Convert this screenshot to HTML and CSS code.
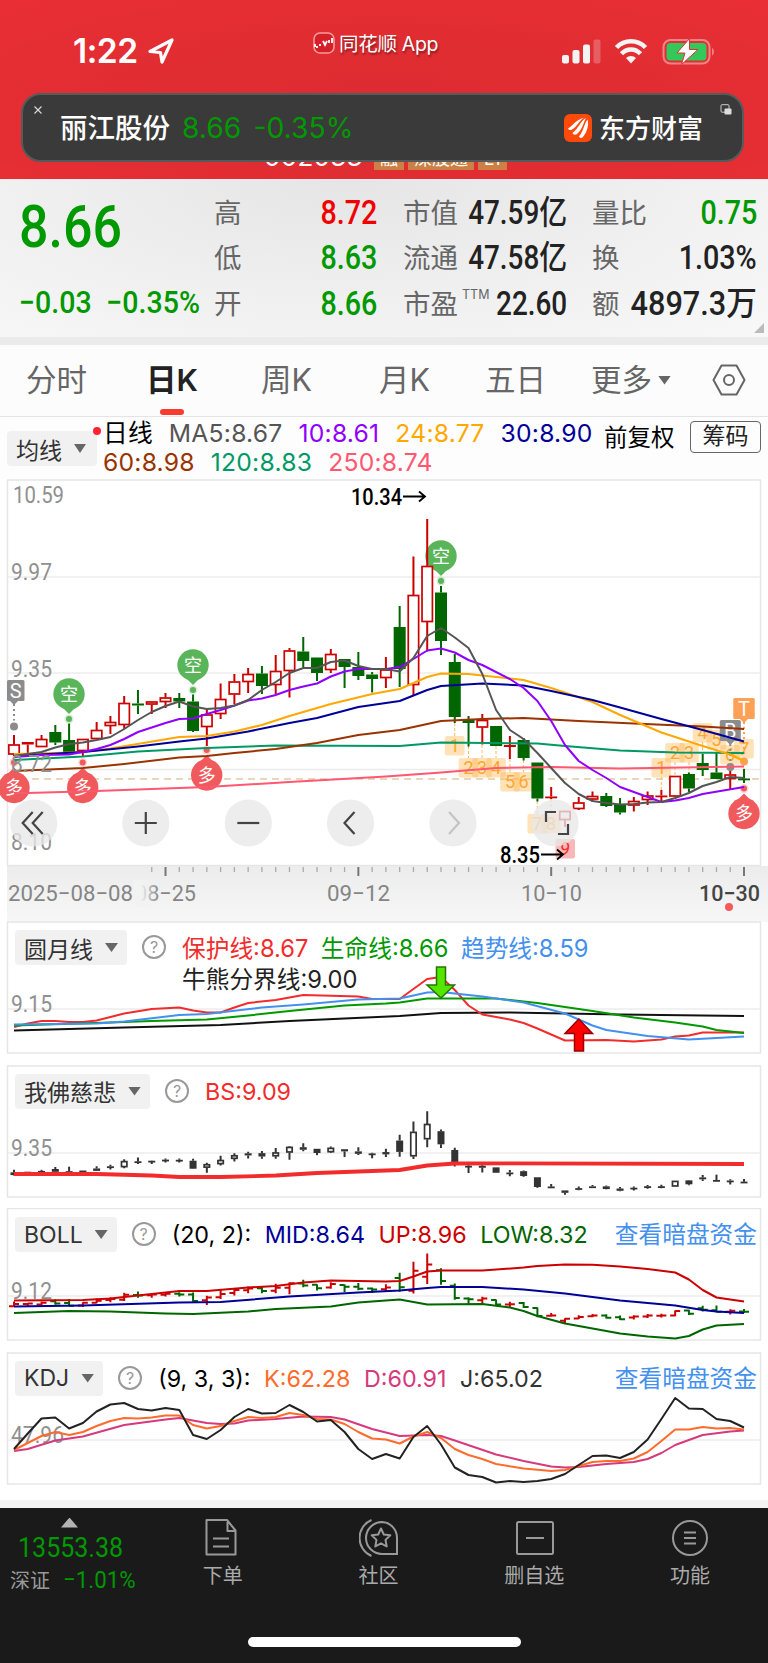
FILE: index.html
```
<!DOCTYPE html>
<html lang="zh-CN">
<head>
    <meta charset="UTF-8">
    <meta name="viewport" content="width=device-width, initial-scale=1.0">
    <title>丽江股份</title>
    <link rel="stylesheet" href="styles.css">
</head>
<body>
    <header class="top">
        <div class="status">
            <div class="clock">
                <span>1:22</span>
                <svg width="28" height="28" viewBox="0 0 28 28"><path d="M3 14.5 L25 3 L15 25 L13.5 15.5 Z" fill="none" stroke="#fff" stroke-width="3.2" stroke-linejoin="round"/></svg>
            </div>
            <div class="source">
                <svg width="22" height="22" viewBox="0 0 22 22"><rect x="1" y="1" width="20" height="20" rx="6" fill="#d5202a" stroke="#f49a9c" stroke-width="1.6"/><path d="M2 12v3M4 14v2M7 12v2M10 9l2 4 2-4M16 8v3M19 6v5" stroke="#fff" stroke-width="1.8" fill="none"/></svg>
                <span>同花顺 App</span>
            </div>
            <svg class="signals" width="154" height="28" viewBox="0 0 154 28">
                <g fill="#f3f3f3">
                    <rect x="1" y="17" width="7" height="8.500" rx="2"/>
                    <rect x="11.500" y="12" width="7" height="13.500" rx="2"/>
                    <rect x="22" y="6.500" width="7" height="19" rx="2"/>
                    <rect x="32.500" y="1.500" width="7" height="24" rx="2" opacity=".25"/>
                    <path d="M70 25.500l-5-5.500a7 7 0 0 1 10 0z"/>
                </g>
                <g fill="none" stroke="#f3f3f3" stroke-width="4.500">
                    <path d="M55.500 9.500a20 20 0 0 1 29 0"/>
                    <path d="M60.500 15.800a12.500 12.500 0 0 1 19 0"/>
                </g>
                <rect x="102.500" y="2" width="46" height="23.500" rx="7" fill="none" stroke="#ee8488" stroke-width="2"/>
                <rect x="105.500" y="5" width="40" height="17.500" rx="4" fill="#34c759"/>
                <path d="M151 10c2.500 1 2.500 6.500 0 7.500z" fill="#ee8488"/>
                <path d="M128.500 .500 L116 15h8l-3.500 11.500L137 11.500h-8.500z" fill="#fff" stroke="#e03036" stroke-width="1"/>
            </svg>
        </div>
        <div class="code-row">
            <span class="code">002033</span><i>融</i><i>深股通</i><i>L1</i>
        </div>
        <div class="floating">
            <svg class="close" width="8" height="8" viewBox="0 0 8 8"><path d="M.5.5l7 7M7.500.5l-7 7" stroke="#ddd" stroke-width="1.100"/></svg>
            <svg class="pip" width="12" height="11" viewBox="0 0 12 11"><rect x="1" y=".700" width="8" height="7.500" rx="1" fill="none" stroke="#ccc"/><rect x="4.500" y="4.500" width="7" height="6" rx="1" fill="#ddd"/></svg>
            <b>丽江股份</b>
            <span class="price">8.66</span>
            <span class="price rate">-0.35%</span>
            <svg class="brand-icon" width="28" height="28" viewBox="0 0 28 28"><rect width="28" height="28" rx="6" fill="#ff4a0c"/><path d="M4 14.500C8 12.500 12 5.500 20.500 3.500c-5 2.500-7 9-12.500 12-2 1-3.500.5-4-1zM8.500 19C14 15 16.500 7 22 4c-3 5-3 11-9 16-2 1.500-4 .5-4.500-1zM15 22.500c4.500-5 5-12.500 8.500-17 1.500 5 0 12-4.500 17.500-1.500 1.500-3.500 1-4-.5z" fill="#fff"/></svg>
            <b class="brand">东方财富</b>
        </div>
    </header>

    <section class="quote">
        <div class="last">
            <span class="num big">8.66</span>
            <div class="change"><span class="num">−0.03</span><span class="num">−0.35%</span></div>
        </div>
        <dl class="stats c1">
            <dt>高</dt><dd class="num up">8.72</dd>
            <dt>低</dt><dd class="num down">8.63</dd>
            <dt>开</dt><dd class="num down">8.66</dd>
        </dl>
        <dl class="stats c2">
            <dt>市值</dt><dd class="num">47.59亿</dd>
            <dt>流通</dt><dd class="num">47.58亿</dd>
            <dt>市盈<sup>TTM</sup></dt><dd class="num">22.60</dd>
        </dl>
        <dl class="stats c3">
            <dt>量比</dt><dd class="num down">0.75</dd>
            <dt>换</dt><dd class="num">1.03%</dd>
            <dt>额</dt><dd class="num">4897.3万</dd>
        </dl>
        <span class="corner"></span>
    </section>

    <nav class="tabs">
        <span>分时</span>
        <span class="active">日K</span>
        <span>周K</span>
        <span>月K</span>
        <span>五日</span>
        <span class="more">更多<i class="caret"></i></span>
        <svg width="34" height="32" viewBox="0 0 34 32"><path d="M9.500 1.500h15L32.500 16l-8 14.500h-15L1.500 16z" fill="none" stroke="#666" stroke-width="2" stroke-linejoin="round"/><circle cx="17" cy="16" r="5" fill="none" stroke="#666" stroke-width="2"/></svg>
    </nav>

    <section class="legend">
        <span class="chip">均线<i class="caret"></i></span>
        <div class="ma">
            <p><em>日线</em><span style="color:#555">MA5:8.67</span><span style="color:#9000ff">10:8.61</span><span style="color:#ffa800">24:8.77</span><span style="color:#000099">30:8.90</span></p>
            <p><span style="color:#993300">60:8.98</span><span style="color:#009966">120:8.83</span><span style="color:#ff5870">250:8.74</span></p>
        </div>
        <span class="adjust">前复权</span>
        <span class="chips-btn">筹码</span>
    </section>

    <svg class="kline" id="kline" viewBox="0 479 768 443" width="768" height="443">
        <defs>
            <linearGradient id="axis" x1="0" y1="0" x2="0" y2="1"><stop offset="0" stop-color="#ececec"/><stop offset="1" stop-color="#f7f7f7"/></linearGradient>
            <linearGradient id="fade"><stop offset="0" stop-color="#f2f2f2"/><stop offset=".3" stop-color="#f2f2f2"/><stop offset="1" stop-color="#f2f2f2" stop-opacity="0"/></linearGradient>
        </defs>
    </svg>

    <section class="panel">
        <svg id="moon" viewBox="0 921 768 133" width="768" height="133"></svg>
        <div class="bar">
            <span class="chip">圆月线<i class="caret"></i></span><span class="help">?</span>
            <p class="vals wrap"><span style="color:#f22c2c">保护线:8.67</span><span style="color:#009900">生命线:8.66</span><span style="color:#4490ee">趋势线:8.59</span><span style="color:#222">牛熊分界线:9.00</span></p>
        </div>
    </section>

    <section class="panel">
        <svg id="buddha" viewBox="0 1064.500 768 133" width="768" height="133"></svg>
        <div class="bar">
            <span class="chip">我佛慈悲<i class="caret"></i></span><span class="help">?</span>
            <p class="vals"><span style="color:#f22c2c">BS:9.09</span></p>
        </div>
    </section>

    <section class="panel">
        <svg id="boll" viewBox="0 1208 768 133" width="768" height="133"></svg>
        <div class="bar">
            <span class="chip">BOLL<i class="caret"></i></span><span class="help">?</span>
            <p class="vals"><span>(20, 2):</span><span style="color:#000099">MID:8.64</span><span style="color:#cc0000">UP:8.96</span><span style="color:#006600">LOW:8.32</span></p>
            <a class="link">查看暗盘资金</a>
        </div>
    </section>

    <section class="panel">
        <svg id="kdj" viewBox="0 1351.500 768 133" width="768" height="133"></svg>
        <div class="bar">
            <span class="chip">KDJ<i class="caret"></i></span><span class="help">?</span>
            <p class="vals"><span>(9, 3, 3):</span><span style="color:#ff6b2c">K:62.28</span><span style="color:#d63a7c">D:60.91</span><span style="color:#333">J:65.02</span></p>
            <a class="link">查看暗盘资金</a>
        </div>
    </section>

    <footer class="bottom">
        <div class="index">
            <i class="tri"></i>
            <span class="num">13553.38</span>
            <div><small>深证</small><span class="num pct">−1.01%</span></div>
        </div>
        <div class="item">
            <svg width="40" height="40" viewBox="0 0 40 40"><path d="M3.500 2h20.500l8.500 10.500v24h-29z M24.500 2v11H32M10 20.500h16M10 28.500h16" fill="none" stroke="#999" stroke-width="2" stroke-linejoin="round"/></svg>
            <span>下单</span>
        </div>
        <div class="item">
            <svg width="40" height="40" viewBox="0 0 40 40"><path d="M23 4a16 16 0 1 0 0 32h15V20A15.500 16 0 0 0 23 4zM12.500 2a19.500 19.500 0 0 0 0 36" fill="none" stroke="#999" stroke-width="2"/><path d="M22 10.500l2.800 6 6.500.8-4.800 4.600 1.200 6.600-5.700-3.200-5.700 3.200 1.200-6.600-4.800-4.600 6.500-.8z" fill="none" stroke="#999" stroke-width="2" stroke-linejoin="round"/></svg>
            <span>社区</span>
        </div>
        <div class="item">
            <svg width="40" height="40" viewBox="0 0 40 40"><rect x="3" y="4" width="36" height="32" rx="1.500" fill="none" stroke="#999" stroke-width="2"/><path d="M12 20h18" stroke="#999" stroke-width="2"/></svg>
            <span>删自选</span>
        </div>
        <div class="item">
            <svg width="40" height="40" viewBox="0 0 40 40"><circle cx="20" cy="20" r="17" fill="none" stroke="#999" stroke-width="2"/><path d="M14 14.500h12M14 20h12M14 25.500h12" stroke="#999" stroke-width="2"/></svg>
            <span>功能</span>
        </div>
        <span class="home"></span>
    </footer>

    <script src="chart.js"></script>
</body>
</html>
```

FILE: styles.css
```
* {
    box-sizing: border-box;
}

body {
    margin: 0;
    width: 768px;
    height: 1663px;
    overflow: hidden;
    background-color: #fff;
    font-family: Inter, "Noto Sans CJK SC", sans-serif;
    color: #222;
}

p, dl, dd {
    margin: 0;
}

i, em {
    font-style: normal;
}

.num {
    font-family: Roboto, "Noto Sans CJK SC", sans-serif;
}

/* red header */
.top {
    position: relative;
    height: 179px;
    overflow: hidden;
    background: radial-gradient(ellipse at 50% 60%, #dc2c31 0%, #e12d32 50%, #e92f35 100%);
}

.status {
    display: flex;
    justify-content: space-between;
    padding: 30px 53px 0 73px;
    height: 80px;
    color: #fff;
}

.clock {
    display: flex;
    gap: 9px;
    width: 240px;
    font-size: 33.500px;
    line-height: 43px;
    font-weight: 600;
    letter-spacing: -0.5px;
}

.clock svg {
    margin-top: 7px;
}

.source {
    display: flex;
    gap: 4px;
    width: 248px;
    font-size: 19.500px;
    line-height: 29px;
    letter-spacing: -0.3px;
    text-shadow: 1px 2px 2px rgba(0, 0, 0, 0.4);
}

.source svg {
    margin-top: 2px;
}

.signals {
    margin-top: 8px;
}

.code-row {
    display: flex;
    align-items: flex-end;
    gap: 4px;
    height: 90px;
    padding-left: 264px;
    color: #fff;
}

.code {
    width: 106px;
    font-size: 26px;
    line-height: 27px;
    letter-spacing: 0.3px;
}

.code-row i {
    padding: 0 6px;
    background-color: #cc8044;
    font-size: 18px;
    line-height: 25px;
    height: 24px;
}

.floating {
    position: absolute;
    left: 21px;
    top: 93px;
    width: 723px;
    height: 69px;
    display: flex;
    align-items: center;
    padding: 0 39px 3px 37px;
    border: 2px solid #555a5a;
    border-radius: 20px;
    background-color: #3a3a3a;
    color: #fff;
}

.floating b {
    font-size: 27.500px;
    font-weight: 500;
}

.floating .price {
    margin: 3px 0 0 12px;
    font-size: 28.300px;
    color: #009900;
}

.brand-icon {
    margin: 3px 0 0 auto;
}

.floating .brand {
    margin-left: 7px;
    font-size: 26px;
}

.close, .pip {
    position: absolute;
    top: 11px;
    left: 11px;
}

.pip {
    top: 9px;
    left: 697px;
}

/* quote */
.quote {
    position: relative;
    display: flex;
    height: 166px;
    padding: 10px 11px 0 19px;
    border-top: 1px solid #f8e8e8;
    border-bottom: 8px solid #ebebeb;
    background: radial-gradient(ellipse at 45% 0, #e5e5e5, #f0f0f0 55%, #f8f8f8);
}

.last {
    width: 195px;
    color: #009900;
}

.big {
    display: block;
    height: 90px;
    font-size: 60px;
    line-height: 74px;
    font-weight: 500;
    transform: scaleX(.865);
    transform-origin: left;
}

.change {
    display: flex;
    gap: 16px;
    font-size: 31px;
    font-weight: 500;
    line-height: 46px;
    transform: scaleX(.92);
    transform-origin: left;
}

.stats {
    display: grid;
    grid-template-columns: 54px 1fr;
    grid-template-rows: 45px 46px 45px;
    align-items: center;
}

.c1 {
    width: 163px;
}

.c2 {
    width: 164px;
    margin-left: 26px;
}

.c3 {
    width: 165px;
    margin-left: 25px;
}

.stats dt {
    font-size: 27.500px;
    line-height: 30px;
    color: #666;
    white-space: nowrap;
}

.stats sup {
    position: relative;
    top: -4px;
    margin-left: 4px;
    font-size: 12.500px;
    line-height: 0;
}

.stats dd {
    justify-self: end;
    margin-left: -50px;
    font-size: 33px;
    font-weight: 500;
    line-height: 40px;
    white-space: nowrap;
    transform: scaleX(.87);
    transform-origin: right;
}

.c2 dd {
    transform: scaleX(.845);
}

.c3 dd:last-child {
    transform: scaleX(.93);
}

.stats .up {
    color: #f00000;
}

.stats .down {
    color: #009900;
}

.corner {
    position: absolute;
    right: 4px;
    bottom: 4px;
    border-left: 10px solid transparent;
    border-bottom: 10px solid #bbb;
}

/* period tabs */
.tabs {
    display: grid;
    grid-template-columns: 122px 113px 118px 106px 106px 120px 34px;
    align-items: center;
    height: 72px;
    padding: 0 0 2px 27px;
    border-bottom: 1px solid #e4e4e4;
    background-color: #fcfcfc;
    font-size: 30.500px;
    color: #666;
}

.tabs span {
    line-height: 40px;
    margin-left: -1px;
}

.tabs .active {
    position: relative;
    margin-left: -3px;
    font-weight: 600;
    color: #222;
}

.active::after {
    content: "";
    position: absolute;
    left: 14px;
    bottom: -15px;
    width: 24px;
    height: 6px;
    border-radius: 3px;
    background-color: #f73c2f;
}

.caret {
    display: inline-block;
    width: 13px;
    height: 9px;
    background-color: #666;
    clip-path: polygon(0 0, 100% 0, 50% 100%);
}

.more .caret {
    margin: 0 0 6px 6px;
}

/* average lines */
.legend {
    display: flex;
    height: 62px;
    padding-left: 7px;
    background-color: #fdfdfd;
}

.chip {
    display: flex;
    align-items: center;
    justify-content: space-between;
    height: 35px;
    padding: 0 9px 0 9px;
    border-radius: 4px;
    background-color: #f1f1f1;
    font-size: 23px;
    color: #333;
    white-space: nowrap;
}

.chip .caret {
    margin-left: 12px;
}

.legend .chip {
    position: relative;
    width: 90px;
    margin-top: 14px;
    padding: 0 11px 0 9px;
}

.legend .chip::after {
    content: "";
    position: absolute;
    right: -4px;
    top: -4px;
    width: 8px;
    height: 8px;
    border-radius: 50%;
    background-color: #ff2233;
}

.ma {
    width: 501px;
    padding: 2px 0 0 6px;
    font-size: 24.700px;
    line-height: 29px;
    letter-spacing: 0.22px;
    white-space: nowrap;
}

.ma p {
    display: flex;
    gap: 16px;
}

.ma em {
    color: #000;
}

.adjust {
    margin: 5px 16px 0 6px;
    width: 70px;
    font-size: 23.500px;
    line-height: 31px;
    color: #000;
    white-space: nowrap;
}

.chips-btn {
    width: 71px;
    height: 32px;
    margin-top: 4px;
    border: 1.500px solid #666;
    border-radius: 4px;
    font-size: 23px;
    line-height: 28px;
    text-align: center;
}

svg {
    display: block;
}

svg text {
    font-family: Roboto, "Noto Sans CJK SC", sans-serif;
}

/* indicator panels, header row lies over its chart */
.panel {
    display: grid;
    margin-bottom: 10.500px;
}

.kline + .panel {
    margin-top: -1px;
}

.panel > svg, .panel > .bar {
    grid-area: 1 / 1;
}

.bar {
    display: flex;
    align-items: flex-start;
    padding: 9px 11px 0 15px;
}

.help {
    width: 24px;
    height: 24px;
    margin: 5px 16px 0 15px;
    border: 2px solid #999;
    border-radius: 50%;
    font-size: 16px;
    line-height: 20px;
    text-align: center;
    color: #999;
}

.vals {
    display: flex;
    gap: 13.500px;
    font-size: 23.300px;
    line-height: 36px;
    color: #000;
    white-space: nowrap;
}

.vals.wrap {
    flex-wrap: wrap;
    gap: 0 12.500px;
    width: 440px;
    font-size: 23.700px;
    line-height: 31px;
    padding-top: 3px;
}

.link {
    margin-left: auto;
    font-size: 23.700px;
    line-height: 35px;
    color: #4490ee;
}

/* bottom bar */
.bottom {
    position: relative;
    display: flex;
    height: 164px;
    margin-top: 15px;
    border-top: 8px solid #f3f3f3;
    background-color: #1a1a1a;
    color: #aaa;
}

.index {
    width: 145px;
    padding: 10px 0 0 10px;
    color: #009900;
}

.tri {
    display: block;
    width: 17px;
    height: 10px;
    margin-left: 51px;
    background-color: #b3b3b3;
    clip-path: polygon(50% 0, 100% 100%, 0 100%);
}

.index .num {
    display: block;
    margin-left: 8px;
    font-size: 27.500px;
    line-height: 40px;
    transform: scaleX(.91);
    transform-origin: left;
}

.index div {
    display: flex;
    align-items: center;
    height: 24px;
}

.index small {
    font-size: 20px;
    color: #999;
}

.index .pct {
    margin-left: 13px;
    font-size: 24.500px;
}

.item {
    display: flex;
    flex-direction: column;
    align-items: center;
    width: 156px;
    padding-top: 10px;
    font-size: 20px;
    line-height: 36px;
}

.home {
    position: absolute;
    left: 248px;
    bottom: 17px;
    width: 273px;
    height: 10px;
    border-radius: 5px;
    background-color: #fff;
}
```

FILE: chart.js
```
const NS = 'http://www.w3.org/2000/svg';
const X = i => 14 + i * 13.774;

const add = (parent, tag, attrs, text) => {
    const el = document.createElementNS(NS, tag);
    for (const k in attrs) el.setAttribute(k, attrs[k]);
    if (text) el.textContent = text;
    parent.appendChild(el);
    return el;
};

// [red or green, high, body top, body bottom, low]
const candles = [
    ['r', 735, 744.5, 754.5, 756], ['r', 742, 742, 744.5, 753], ['r', 735, 739, 747, 747],
    ['g', 725, 732, 742.5, 745], ['g', 723.5, 740, 752, 752], ['r', 739, 739, 751, 756],
    ['r', 722, 730, 739, 739], ['r', 716, 722, 726, 734], ['r', 696, 703, 725, 729],
    ['g', 690, 703.5, 705.5, 714], ['r', 701, 701.5, 704.5, 714], ['r', 693, 697.5, 702, 708],
    ['g', 693, 698, 701.5, 708], ['g', 694.5, 701.5, 731, 732], ['r', 709, 714.5, 727, 746],
    ['r', 683.5, 699, 714, 719], ['r', 674, 681.5, 694.5, 704], ['r', 668, 674, 682, 693],
    ['g', 666, 673.5, 686, 694], ['r', 655, 671, 685, 694], ['r', 648, 650.5, 671, 697.5],
    ['g', 637, 651.5, 661, 667], ['g', 657.5, 657.5, 673, 681], ['r', 649, 654, 670, 673],
    ['g', 659, 659, 667, 688], ['g', 652, 667, 676, 680], ['g', 672, 674.5, 679, 692.5],
    ['r', 657, 669.5, 678, 688], ['g', 606, 627, 669, 687], ['r', 556.5, 595, 685, 695],
    ['r', 519, 566, 622, 651.5], ['g', 586, 592.5, 641, 655], ['g', 654, 662, 717, 723],
    ['g', 716, 720, 723, 746.5], ['r', 714, 720, 727.5, 744.5], ['g', 726, 726, 746, 746],
    ['r', 736, 745, 747, 759], ['g', 738, 740, 758, 760.5], ['g', 762.5, 762.5, 798.5, 801.5],
    ['r', 787, 796.5, 797.5, 799], ['r', 811, 811, 820, 827], ['r', 797, 802.5, 809, 810],
    ['r', 791.5, 796, 799.5, 801.5], ['g', 793, 796, 806, 807], ['g', 798, 804, 812.5, 814.5],
    ['r', 797, 801, 805.5, 811.5], ['r', 791.5, 795.5, 800, 805], ['r', 790, 795.5, 797, 803],
    ['r', 776, 776, 796.5, 797], ['g', 772.5, 774, 788.5, 792], ['g', 754, 763, 770, 776],
    ['g', 753, 772.5, 779, 779], ['r', 770, 774.5, 779, 789], ['g', 769, 778.5, 779.5, 783]
];

// lines are written as "index,y index,y ..."
const line = (svg, pts, color, width = 2) => {
    const d = pts.split(' ').map(p => {
        const [i, y] = p.split(',').map(Number);
        return X(i).toFixed(1) + ',' + y;
    }).join(' ');
    add(svg, 'polyline', { points: d, fill: 'none', stroke: color, 'stroke-width': width, 'stroke-linejoin': 'round' });
};

const frame = (svg, top, bottom, grid) => {
    add(svg, 'rect', { x: 7.5, y: top, width: 753, height: bottom - top, fill: '#fff', stroke: '#e6e6e6', 'stroke-width': 1.5 });
    grid.forEach(y => add(svg, 'line', { x1: 8, x2: 760, y1: y, y2: y, stroke: '#ececec', 'stroke-width': 1.5 }));
};

const label = (svg, x, y, text, w, attrs = {}) =>
    add(svg, 'text', { x, y, 'font-size': 23.5, fill: '#909090', textLength: w, lengthAdjust: 'spacingAndGlyphs', ...attrs }, text);

const drawCandles = (svg, map, bw, red, green) => {
    candles.forEach(([c, h, t, b, l], i) => {
        const x = X(i);
        const color = c === 'r' ? red : green;
        const top = map(t), bot = map(b);
        add(svg, 'path', { d: `M${x} ${map(h)}V${top}M${x} ${bot}V${map(l)}`, stroke: color, 'stroke-width': 2 });
        const solid = c === 'g' || bot - top < 3;
        add(svg, 'rect', solid
            ? { x: x - bw / 2, y: top, width: bw, height: Math.max(bot - top, 1.8), fill: color }
            : { x: x - bw / 2 + 0.8, y: top + 0.5, width: bw - 1.6, height: bot - top - 1, fill: '#fff', stroke: color, 'stroke-width': 1.7 });
    });
};

const pin = (svg, x, y, text, color, dir) => {
    add(svg, 'circle', { cx: x, cy: y, r: 15.7, fill: color });
    add(svg, 'path', { d: `M${x - 7} ${y + dir * 13}L${x} ${y + dir * 20}L${x + 7} ${y + dir * 13}z`, fill: color });
    add(svg, 'circle', { cx: x, cy: y + dir * 25, r: 4.5, fill: color, opacity: 0.25 });
    add(svg, 'circle', { cx: x, cy: y + dir * 25, r: 3, fill: color });
    add(svg, 'text', { x, y: y + 6.5, 'font-size': 18, fill: '#fff', 'text-anchor': 'middle' }, text);
};

const k = document.getElementById('kline');
add(k, 'rect', { x: 7, y: 866, width: 761, height: 57, fill: 'url(#axis)' });
frame(k, 480, 865.5, [577, 673, 769.5]);
add(k, 'line', { x1: 8, x2: 760, y1: 779, y2: 779, stroke: '#e3c9a4', 'stroke-width': 1.5, 'stroke-dasharray': '7 5' });

const green = '#5ab55a', rose = '#f05a5c';
[[69, 694], [193, 665], [441, 556]].forEach(([x, y]) => pin(k, x, y, '空', green, 1));
[[14, 787.5], [82.7, 787.5], [206.7, 775], [744, 813.5]].forEach(([x, y]) => pin(k, x, y, '多', rose, -1));

// numbered turns: x, top, digit, y of the candle end
const turns = [
    [454.7, 736, 1, 723], [468.5, 758, 2, 746], [482, 758, 3, 745], [496, 758, 4, 746], [510, 772, 5, 759],
    [523.5, 772, 6, 760], [537.3, 814, 7, 801], [551, 814, 8, 799], [661.3, 758, 1, 790], [675, 743, 2, 776],
    [689, 743, 3, 772], [702.6, 723, 4, 754], [716.4, 730, 5, 753], [730, 745, 6, 770], [744, 739, 7, 769]
];
turns.forEach(([x, y, n, end]) => {
    add(k, 'line', { x1: x, x2: x, y1: end < y ? end : y + 19, y2: end < y ? y : end, stroke: '#ffb85c', 'stroke-width': 1, 'stroke-dasharray': '3 2' });
    add(k, 'rect', { x: x - 9.8, y, width: 19.6, height: 19.5, rx: 2, fill: '#ffb74d', opacity: 0.4 });
    add(k, 'text', { x, y: y + 16, 'font-size': 18, fill: '#ffa630', 'text-anchor': 'middle' }, String(n));
});
add(k, 'rect', { x: 555.5, y: 839, width: 19.5, height: 19.5, rx: 2, fill: '#fbb8b8' });
add(k, 'text', { x: 565, y: 855, 'font-size': 18, 'font-style': 'italic', fill: '#ee2a2a', 'text-anchor': 'middle' }, '9');

drawCandles(k, y => y, 12, '#cc0000', '#006600');

const flag = (x, y, w, letter, color, dotY) => {
    add(k, 'line', { x1: x, x2: x, y1: y + 24, y2: dotY - 6, stroke: color, 'stroke-width': 2, 'stroke-dasharray': '2 3' });
    add(k, 'circle', { cx: x, cy: dotY, r: 4, fill: color });
    const bx = letter === 'S' ? 7 : x - w / 2;
    add(k, 'rect', { x: bx, y, width: w, height: 21, rx: 1.5, fill: color });
    add(k, 'path', { d: `M${x - 4} ${y + 21}h8l-4 4z`, fill: color });
    add(k, 'text', { x: bx + w / 2, y: y + 17.5, 'font-size': 20, fill: '#fff', 'text-anchor': 'middle' }, letter);
};
flag(14, 680, 17.5, 'S', '#8c8c8c', 726.5);
flag(730.3, 720, 21, 'B', '#8c8c8c', 767);
flag(744, 698, 21.5, 'T', '#ffa057', 761.5);

line(k, '0,793 1,793 6,791 14,787 20,782 27,776.5 31,772.5 35,768 39,767 44,768.5 53,766.5', '#ff5870');
line(k, '0,760 5,756.5 9,751.5 14,748 19,745.5 28,746 31,742.5 38,743.5 40,746 44,750.5 48,752.5 53,753', '#009966');
line(k, '0,771 5,768 8,764 12,757.5 14,756 16,753 19,749 22,743 25,735 28,730 31,721 34,719 37,718 41,721 45,723.5 50,726.5 53,729', '#993300');
line(k, '0,754 3,753 5,752 7,748.5 12,737 14,736 16,731.5 18,725 20,716 23,704 26,694 28,689 30,677 31,673.5 33,674 37,680 39,688 42,702 44,715 47,732.5 50,746 52,754.5 53,761', '#ffa800');
line(k, '0,756 5,752 9,746.5 12,741.5 14,738.5 17,731.5 20,723 22,718 25,707 28,701 30,690 31,686 34,683.5 37,685.5 39,691 42,700 44,707.5 47,719 50,730 53,741.5', '#000099');
line(k, '0,757 2,755 4,754.5 5,752 6,749 7,745 8,739 9,732 10,727.5 11,723 12,719 13,718.5 14,714 15,710 16,705.5 17,700.5 18,698.5 19,695 20,690 21,686.5 22,683.5 23,676.5 24,671.5 25,669 27,669 28,667 29,659 30,650.5 31,648.5 32,652.5 33,660 34,665 36,679 37,688 38,701 39,721 40,745 41,761 42,770 43,778 44,787 46,797 47,802 48,800.5 49,798 50,794 53,787', '#9000ff');
line(k, '0,756 2,752 3,747.5 4,744 5,742.5 6,740 7,737 8,729 9,720 10,712 11,706 12,701.5 13,706.5 14,709 15,708 16,705.5 17,700 18,690 19,682 20,673 21,668 22,668 23,662 24,660.5 25,666 26,669 27,669 28,671.5 29,658 30,636 31,628 32,637.5 33,648 34,674 35,710 36,730 37,739 38,753 39,768 40,783 41,794 42,801 43,803 44,804.5 45,804 46,802.5 47,802 48,798 49,793 50,786 51,782 52,777 53,778', '#555555');

label(k, 13, 503, '10.59', 51);
label(k, 11, 580, '9.97', 41);
label(k, 11, 676.5, '9.35', 41);
label(k, 11, 772, '8.72', 41);
label(k, 11, 850, '8.10', 41);
const black = { fill: '#000', 'font-weight': 500 };
label(k, 351, 505, '10.34', 51, black);
label(k, 500, 863, '8.35', 40, black);
const arrow = (x, y) => add(k, 'path', { d: `M${x} ${y}h22m-6 -5l6 5l-6 5`, fill: 'none', stroke: '#000', 'stroke-width': 1.8 });
arrow(403, 496.5);
arrow(541, 854.5);

// round tool buttons
const icons = ['M-1 -11l-10 11l10 11M9 -11l-10 11l10 11', 'M-11 0h22M0 -11v22', 'M-11 0h22', 'M4 -11l-10 11l10 11', 'M-4 -11l10 11l-10 11', 'M-9 -1v-10h10M3 11h10v-10'];
[33.7, 145.8, 248.3, 350.5, 453, 555].forEach((x, i) => {
    const g = add(k, 'g', { transform: `translate(${x} 823)` });
    add(g, 'circle', { r: 23.6, fill: '#e8e8e8', opacity: 0.78 });
    add(g, 'path', { d: icons[i], fill: 'none', stroke: i === 4 ? '#c4c4c4' : '#444', 'stroke-width': 2.2 });
});

// date axis
for (let i = 10; i < 54; i++) {
    const major = (i - 11) % 14 === 0;
    add(k, 'line', { x1: X(i), x2: X(i), y1: 867, y2: major ? 876 : 872, stroke: major ? '#777' : '#aaa', 'stroke-width': major ? 2 : 1.3 });
}
const date = { 'font-size': 22.5, fill: '#858585' };
label(k, 135, 901, '08−25', 61, date);
add(k, 'rect', { x: 133, y: 880, width: 26, height: 26, fill: 'url(#fade)' });
label(k, 8, 901, '2025−08−08', 125, date);
label(k, 327, 901, '09−12', 63, date);
label(k, 521, 901, '10−10', 61, date);
label(k, 699, 901, '10−30', 61, { ...date, fill: '#444', 'font-weight': 500 });
add(k, 'circle', { cx: 729, cy: 907, r: 4, fill: '#f55a5a' });

// 圆月线
const moon = document.getElementById('moon');
frame(moon, 922, 1053, [1009]);
line(moon, '0,1030.5 8,1027.5 15,1025 20,1021 24,1018.5 28,1016 31,1013 36,1012.5 44,1014.5 53,1016', '#111');
line(moon, '0,1027 1,1023.5 2,1021 3,1021 4,1022 5,1022 6,1020.5 7,1017 8,1013.5 10,1009 12,1007.5 13,1010.5 14,1012.5 15,1012.5 16,1007.5 17,1003 19,1000 21,995 25,996.5 26,999 28,999 29,989 30,979 31,977 32,990 33,1005.5 34,1014.5 36,1019.5 37,1023 38,1028.5 40,1040.5 43,1040 45,1041.5 47,1039.5 48,1036.5 49,1035.5 50,1032.5 53,1032.5', '#f22c2c');
line(moon, '0,1025.5 7,1022.5 10,1021 14,1019.5 17,1015.5 20,1011 24,1005.5 27,1003.5 28,1002.5 30,998.5 35,998.5 38,1003 42,1011 45,1017.5 48,1022.5 50,1026.5 51,1030 53,1033', '#009900');
line(moon, '0,1024.5 6,1023.5 8,1021.5 12,1015 14,1014 18,1007.5 21,1004.5 25,999.5 28,998.5 30,992.5 31,992 34,996.5 37,1002.5 40,1013.5 41,1019.5 42,1025.5 43,1030 46,1036 49,1039.5 53,1036.5', '#4490ee');
label(moon, 11, 1012, '9.15', 41);
add(moon, 'path', { d: 'M436.5 967h9v18h9L441 998L427 985h9.500z', fill: '#55e600', stroke: '#267500', 'stroke-width': 1.5 });
add(moon, 'path', { d: 'M574.5 1051h9v-17.500h9L578.800 1019L565 1033.500h9.500z', fill: '#ff0000', stroke: '#990000', 'stroke-width': 1.500 });

// 我佛慈悲
const buddha = document.getElementById('buddha');
frame(buddha, 1065.5, 1196.5, [1152.5]);
label(buddha, 11, 1155.5, '9.35', 41);
drawCandles(buddha, y => 1152.5 + (y - 673) * 0.271, 7, '#333', '#333');
line(buddha, '0,1173.5 6,1173.5 10,1175 12,1176.5 15,1176.5 19,1175 22,1172.5 27,1170 28,1169.5 30,1165 32,1163 36,1162.8 53,1163.5', '#f22c2c', 3.8);

// BOLL
const boll = document.getElementById('boll');
frame(boll, 1208.5, 1340, [1296]);
label(boll, 11, 1299, '9.12', 41);
candles.forEach(([c, h, t, b, l], i) => {
    const y = v => 1254 + (v - 519) * 0.222;
    const open = y(c === 'r' ? b : t), close = y(c === 'r' ? t : b), x = X(i);
    add(boll, 'path', { d: `M${x - 5} ${open}H${x}M${x} ${close}h5M${x} ${y(h) - 0.5}V${y(l) + 0.5}`, stroke: c === 'r' ? '#cc0000' : '#006600', 'stroke-width': 2, fill: 'none' });
});
line(boll, '0,1300.5 5,1300 7,1298.5 9,1295.5 12,1291 14,1291 17,1287.5 19,1286 21,1282.5 23,1280.5 27,1281.5 28,1281 29,1276.5 30,1271.5 31,1270.5 34,1270.5 37,1267.5 38,1266 40,1264.5 42,1264.7 44,1266.5 46,1269 48,1272.5 49,1279.5 50,1290 51,1297.5 53,1301.5', '#cc0000');
line(boll, '0,1306.5 5,1305.5 12,1302.5 15,1302 20,1296.5 25,1292.5 28,1290.5 30,1288 31,1287 34,1287 37,1289.5 40,1293.5 44,1300.5 48,1305.5 50,1310 51,1311.5 53,1313', '#000099');
line(boll, '0,1313 4,1311 7,1311.5 11,1313.5 13,1314 17,1311.5 19,1309 23,1306.5 25,1302.5 27,1300.5 28,1299.5 30,1304.5 34,1304 36,1307.5 37,1311 38,1316 40,1323.5 44,1333.5 46,1336.5 48,1338.5 49,1336 50,1329.5 51,1325.5 53,1324', '#006600');

// KDJ
const kdj = document.getElementById('kdj');
frame(kdj, 1352.5, 1483.5, [1439.5]);
label(kdj, 11, 1442, '47.96', 53);
line(kdj, '0,1450.5 1,1448.5 3,1440 5,1436 8,1424.5 11,1419 12,1417.5 14,1422.5 15,1423.5 16,1423 17,1420 19,1418.5 21,1416 23,1416.5 24,1419 26,1428.5 28,1435.5 30,1434.5 31,1435.5 32,1440 35,1454 37,1460.5 39,1466 40,1467 41,1466.5 43,1463.5 45,1461.5 46,1458.5 47,1452.5 48,1444.5 49,1439.5 50,1434.5 52,1431 53,1430', '#d63a7c');
line(kdj, '0,1449.5 1,1442.5 2,1435.5 3,1431.5 4,1434.5 5,1431.5 6,1425.5 7,1420.5 8,1417.5 9,1418 10,1417 11,1415 12,1415 13,1424.5 14,1428 15,1425.5 16,1420.5 17,1416.5 18,1417.5 19,1416.5 20,1412.5 21,1414.5 22,1418.5 23,1419 24,1423.5 25,1431.5 26,1438 27,1439 28,1443 29,1436 30,1431.5 31,1437.5 32,1448.5 33,1454.5 34,1458.5 35,1463.5 37,1468 39,1470.5 40,1469.5 41,1465.5 42,1461.5 43,1460.5 44,1460.5 45,1458 46,1451.5 47,1440.5 48,1429 49,1429 50,1426.5 51,1428 52,1427.5 53,1429', '#ff6b2c');
line(kdj, '0,1448.5 1,1433 2,1418 3,1417 4,1428 5,1422.5 6,1411 7,1404 8,1402.5 9,1408.5 10,1410 11,1407.5 12,1409.5 13,1434.5 14,1438.5 15,1429.5 16,1416.5 17,1408.5 18,1413 19,1412.5 20,1404.5 21,1411.5 22,1421 23,1419.5 24,1431.5 25,1448.5 26,1458.5 27,1453.5 28,1458 29,1436.5 30,1425.5 31,1444 32,1467 33,1474.5 34,1476.5 35,1482 36,1480.5 37,1481.5 38,1480.5 39,1478.5 40,1473.5 41,1464.5 42,1455.5 43,1455 44,1457.5 45,1451.5 46,1439 47,1418.5 48,1397.5 49,1408 50,1408.5 51,1418.5 52,1420.5 53,1427', '#222');
```
